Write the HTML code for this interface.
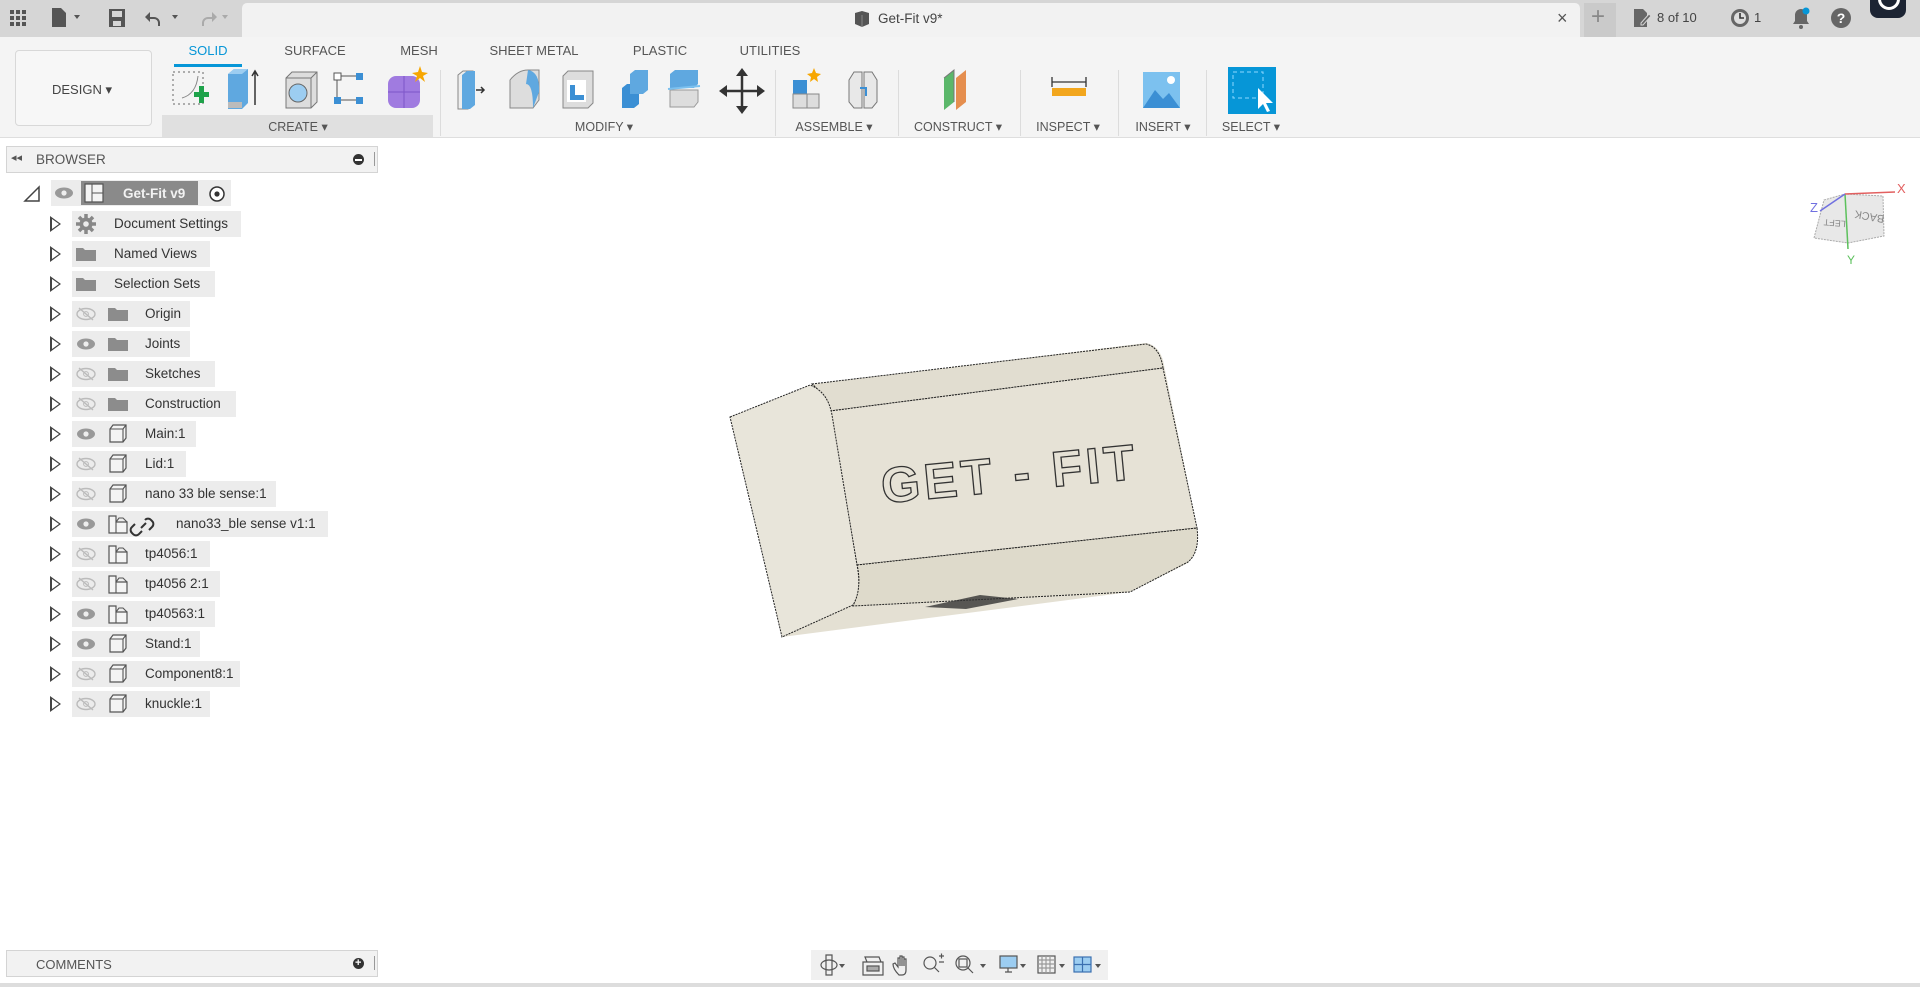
<!DOCTYPE html>
<html><head><meta charset="utf-8">
<style>
*{margin:0;padding:0;box-sizing:border-box}
body{width:1920px;height:987px;background:#fff;font-family:"Liberation Sans",sans-serif;position:relative;overflow:hidden;color:#3c3c3c}
.a{position:absolute}
.t{font-size:12.5px;color:#555;white-space:nowrap}
.tab{position:absolute;top:43px;font-size:13px;color:#555;transform:translateX(-50%)}
.gl{position:absolute;top:119px;font-size:12.5px;color:#555;transform:translateX(-50%);white-space:nowrap}
.sep{position:absolute;top:70px;width:1px;height:66px;background:#dcdcdc}
.row{position:absolute;height:26px;background:#ececec;font-size:13.5px;color:#333;line-height:26px;white-space:nowrap}
.tri{position:absolute;width:0;height:0;border-left:11px solid #444;border-top:8px solid transparent;border-bottom:8px solid transparent}
.tri:after{content:"";position:absolute;left:-9px;top:-5px;border-left:7px solid #fff;border-top:5px solid transparent;border-bottom:5px solid transparent}
</style></head><body>
<!-- top bar -->
<div class="a" style="left:0;top:0;width:1920px;height:37px;background:#d6d6d6"></div>
<div class="a" style="left:242px;top:3px;width:1338px;height:34px;background:#f2f2f2;border-radius:5px 5px 0 0"></div>
<div class="a" style="left:1584px;top:3px;width:32px;height:34px;background:#cacaca"></div>
<svg class="a" style="left:0;top:0" width="260" height="37">
<g fill="#555"><rect x="10" y="10" width="4" height="4"/><rect x="16" y="10" width="4" height="4"/><rect x="22" y="10" width="4" height="4"/><rect x="10" y="16" width="4" height="4"/><rect x="16" y="16" width="4" height="4"/><rect x="22" y="16" width="4" height="4"/><rect x="10" y="22" width="4" height="4"/><rect x="16" y="22" width="4" height="4"/><rect x="22" y="22" width="4" height="4"/>
<path d="M52 8h9l5 5v14h-14z"/><path d="M74 15l3 4 3-4z"/>
<path d="M109 9h16v18h-16z M112 11v6h10v-6z M113 21h8v5h-8z" fill-rule="evenodd"/>
<path d="M150 12l-5 5 5 5v-3h4a4 4 0 0 1 4 4v3h2v-3a6 6 0 0 0-6-6h-4z"/><path d="M172 15l3 4 3-4z"/>
</g><g fill="#aaa"><path d="M212 12l5 5-5 5v-3h-4a4 4 0 0 0-4 4v3h-2v-3a6 6 0 0 1 6-6h4z"/><path d="M222 15l3 4 3-4z"/></g></svg>
<svg class="a" style="left:853px;top:10px" width="18" height="18"><path d="M2 3l7-2 7 2v11l-7 3-7-3z" fill="#555"/><path d="M9 5v12" stroke="#888"/></svg>
<div class="a" style="left:878px;top:11px;font-size:13.5px;color:#444">Get-Fit v9*</div>
<div class="a" style="left:1557px;top:8px;font-size:18px;color:#555">×</div>
<div class="a" style="left:1591px;top:3px;font-size:24px;color:#888">+</div>
<svg class="a" style="left:1632px;top:8px" width="22" height="20"><path d="M2 1h9l4 4v14h-13z" fill="#666"/><path d="M9 15l8-9 2 2-8 9h-2z" fill="#666" stroke="#d6d6d6"/></svg>
<div class="a" style="left:1657px;top:10px;font-size:13px;color:#444">8 of 10</div>
<svg class="a" style="left:1729px;top:7px" width="22" height="22"><circle cx="11" cy="11" r="9" fill="#666"/><circle cx="11" cy="11" r="6" fill="#ddd"/><path d="M11 6v5h4" stroke="#333" stroke-width="1.6" fill="none"/></svg>
<div class="a" style="left:1754px;top:10px;font-size:13px;color:#444">1</div>
<svg class="a" style="left:1790px;top:6px" width="22" height="24"><path d="M11 3a6 6 0 0 1 6 6v6l2 3h-16l2-3v-6a6 6 0 0 1 6-6z" fill="#666"/><circle cx="11" cy="21" r="2" fill="#666"/><circle cx="16" cy="5" r="3.5" fill="#0696d7"/></svg>
<svg class="a" style="left:1830px;top:7px" width="22" height="22"><circle cx="11" cy="11" r="10" fill="#666"/><text x="11" y="16" font-size="14" font-weight="bold" fill="#fff" text-anchor="middle" font-family="Liberation Sans">?</text></svg>
<div class="a" style="left:1870px;top:-14px;width:36px;height:32px;background:#1c2433;border-radius:0 0 8px 8px"></div>
<div class="a" style="left:1878px;top:-12px;width:22px;height:22px;border:3px solid #fff;border-radius:50%"></div>

<!-- toolbar -->
<div class="a" style="left:0;top:37px;width:1920px;height:101px;background:#f4f4f4;border-bottom:1px solid #dedede"></div>
<div class="a" style="left:15px;top:50px;width:137px;height:76px;border:1px solid #d8d8d8;border-radius:4px;background:#f7f7f7"></div>
<div class="a" style="left:52px;top:82px;font-size:13px;color:#444">DESIGN ▾</div>
<div class="tab" style="left:208px;color:#0696d7">SOLID</div>
<div class="a" style="left:174px;top:64px;width:68px;height:3px;background:#0696d7"></div>
<div class="tab" style="left:315px">SURFACE</div>
<div class="tab" style="left:419px">MESH</div>
<div class="tab" style="left:534px">SHEET METAL</div>
<div class="tab" style="left:660px">PLASTIC</div>
<div class="tab" style="left:770px">UTILITIES</div>
<div class="a" style="left:162px;top:115px;width:271px;height:22px;background:#e0e0e0"></div>
<div class="gl" style="left:298px">CREATE ▾</div>
<div class="gl" style="left:604px">MODIFY ▾</div>
<div class="gl" style="left:834px">ASSEMBLE ▾</div>
<div class="gl" style="left:958px">CONSTRUCT ▾</div>
<div class="gl" style="left:1068px">INSPECT ▾</div>
<div class="gl" style="left:1163px">INSERT ▾</div>
<div class="gl" style="left:1251px">SELECT ▾</div>
<div class="sep" style="left:440px"></div><div class="sep" style="left:775px"></div><div class="sep" style="left:898px"></div><div class="sep" style="left:1020px"></div><div class="sep" style="left:1118px"></div><div class="sep" style="left:1206px"></div>
<svg class="a" style="left:0;top:60px" width="1300" height="60">
<!-- sketch -->
<rect x="173" y="12" width="30" height="32" fill="none" stroke="#666" stroke-dasharray="2 3"/><path d="M182 38q14-4 16-22" stroke="#888" fill="none"/><path d="M194 32h5v-6h5v6h5v5h-5v6h-5v-6h-5z" fill="#1ea24a"/>
<!-- extrude -->
<path d="M228 14l6-5h14v34l-6 6h-14z" fill="#5fa8e0"/><path d="M228 14l6-5h14l-6 5z" fill="#9ccdf1"/><path d="M228 42h14v6h-14z" fill="#bbb"/><path d="M255 45v-33M252 16l3-5 3 5" stroke="#333" stroke-width="1.5" fill="none"/>
<!-- revolve -->
<path d="M286 18l6-6h25v30l-6 6h-25z" fill="#ddd" stroke="#777"/><path d="M286 18h25v30M311 18l6-6" stroke="#777" fill="none"/><circle cx="298" cy="33" r="9" fill="#9ccdf1" stroke="#666"/>
<!-- pattern -->
<rect x="334" y="13" width="7" height="7" fill="#fff" stroke="#555"/><rect x="356" y="13" width="7" height="7" fill="#3b8fd4"/><rect x="334" y="37" width="7" height="7" fill="#3b8fd4"/><rect x="356" y="37" width="7" height="7" fill="#3b8fd4"/><path d="M341 16h15M337 20v17M341 40h15" stroke="#555"/>
<!-- form -->
<rect x="388" y="16" width="32" height="32" rx="8" fill="#a07be0"/><path d="M404 16v32M388 32h32" stroke="#7d56c9"/><path d="M420 6l2 6 6 1-5 3 2 6-5-4-5 4 2-6-5-3 6-1z" fill="#f7a600"/>
<!-- modify -->
<path d="M458 15l5-4h10v34l-5 4h-10z" fill="#eee" stroke="#888"/><path d="M462 15l5-4h8v34l-5 4h-8z" fill="#5fa8e0"/><path d="M476 30h8M481 27l3 3-3 3" stroke="#333" stroke-width="1.5" fill="none"/>
<path d="M510 20q8-10 18-10h11v30l-6 8h-23z" fill="#ddd" stroke="#888"/><path d="M528 10q12 2 11 22l-6 16q0-24-7-24z" fill="#5fa8e0"/>
<path d="M563 16l5-5h25v32l-5 5h-25z" fill="#ddd" stroke="#888"/><rect x="567" y="20" width="19" height="22" fill="#fff"/><path d="M570 25h5v10h9v5h-14z" fill="#3b8fd4"/>
<path d="M622 28l5-4h12v20l-5 4h-12z" fill="#3b8fd4"/><path d="M630 14l5-4h13v20l-5 4h-13z" fill="#5fa8e0"/>
<path d="M670 30h28v12l-4 5h-24z" fill="#ddd" stroke="#999"/><path d="M670 14l5-4h23v14l-4 4h-24z" fill="#5fa8e0"/><path d="M668 29l32-3" stroke="#7cc1ef" stroke-width="2"/>
<path d="M742 12v38M723 31h38" stroke="#333" stroke-width="2.5"/><path d="M742 8l-6 8h12zM742 54l-6-8h12zM719 31l8-6v12zM765 31l-8-6v12z" fill="#333"/>
<!-- assemble -->
<path d="M793 20h14v14h-14z" fill="#3b8fd4"/><path d="M793 34h14v14h-14zM807 34h12v14h-12z" fill="#ddd" stroke="#888"/><path d="M814 8l2 5 5 1-4 3 1 5-4-3-4 3 1-5-4-3 5-1z" fill="#f7a600"/>
<path d="M849 20l5-8h8v36h-8l-5-6z M877 20l-5-8h-8v36h8l5-6z" fill="#e8e8e8" stroke="#777"/><path d="M860 28h6v8" stroke="#3b8fd4" stroke-width="2" fill="none"/>
<!-- construct -->
<path d="M944 18l10-8v32l-10 8z" fill="#5bb76a"/><path d="M956 18l10-8v32l-10 8z" fill="#e58e4e"/><path d="M944 18l10-8v32" fill="none" stroke="#777"/>
<!-- inspect -->
<path d="M1052 17v10M1086 17v10M1052 22h34" stroke="#333" stroke-width="1.3"/><rect x="1052" y="28" width="34" height="8" fill="#f2a61d"/>
<!-- insert -->
<rect x="1143" y="12" width="37" height="36" fill="#7cc1ef"/><circle cx="1171" cy="20" r="4" fill="#fff"/><path d="M1143 48l12-18 8 9 6-6 11 15z" fill="#3b8fd4"/>
<!-- select -->
<rect x="1228" y="7" width="48" height="47" fill="#0696d7"/><rect x="1233" y="12" width="30" height="26" fill="none" stroke="#8fd8ff" stroke-dasharray="4 3"/><path d="M1258 28v21l5-5 4 8 3-1-4-8h7z" fill="#fff"/>
</svg>

<!-- browser -->
<div class="a" style="left:6px;top:146px;width:372px;height:27px;background:#f2f2f2;border:1px solid #d4d4d4"></div>
<div class="a" style="left:11px;top:151px;font-size:11px;color:#555">◂◂</div>
<div class="a" style="left:36px;top:152px;font-size:13.5px;color:#555">BROWSER</div>
<div class="a" style="left:353px;top:154px;width:11px;height:11px;border-radius:50%;background:#333"></div>
<div class="a" style="left:355px;top:159px;width:7px;height:2px;background:#fff"></div>
<div class="a" style="left:374px;top:152px;width:1px;height:14px;background:#999"></div>

<svg class="a" style="left:22px;top:184px" width="20" height="20"><path d="M3 17h14v-14z" fill="none" stroke="#444" stroke-width="1.5"/></svg>
<div class="row" style="left:51px;top:180px;width:180px"></div>
<div class="a" style="left:81px;top:181px;width:117px;height:24px;background:#8a8a8a"></div>
<div class="a" style="left:123px;top:186px;font-size:13.5px;font-weight:bold;color:#f2f2f2">Get-Fit v9</div>
<svg class="a" style="left:207px;top:184px" width="20" height="20"><circle cx="10" cy="10" r="7" fill="#fff" stroke="#333" stroke-width="1.5"/><circle cx="10" cy="10" r="2.6" fill="#333"/></svg>

<svg class="a" style="left:0;top:0;pointer-events:none" width="340" height="720">
<defs>
<g id="eye"><ellipse cx="0" cy="0" rx="9" ry="5.5" fill="#999"/><circle cx="0" cy="0" r="2.6" fill="#eee"/></g>
<g id="eyex"><ellipse cx="0" cy="0" rx="9" ry="5.5" fill="none" stroke="#bbb" stroke-width="1.4"/><circle cx="0" cy="0" r="2.4" fill="none" stroke="#bbb"/><path d="M-7 -6l14 12" stroke="#bbb" stroke-width="1.4"/></g>
<g id="fold"><path d="M-10 -6h7l2 2h11v11h-20z" fill="#8c8c8c"/></g>
<g id="box"><path d="M-8 -5l3-4h13v13l-3 4h-13z" fill="#f4f4f4" stroke="#555" stroke-width="1.2"/><path d="M-8 -5h13v13M5 -5l3-4" fill="none" stroke="#555" stroke-width="1.1"/></g>
<g id="comp"><path d="M-9 -8h7v6h11v11h-18z" fill="#f4f4f4" stroke="#555" stroke-width="1.2"/><path d="M-2 -2v11M-2 -2l3-4h4l4 4" fill="none" stroke="#555" stroke-width="1.1"/></g>
</defs>
<use href="#eye" x="64" y="193"/>
<g transform="translate(94,193)"><path d="M-9 -9h18v18h-18z" fill="#f4f4f4" stroke="#555" stroke-width="1.2"/><path d="M-2 -9v18M-2 0h11" stroke="#555"/></g>
<g transform="translate(86,224)" fill="#888"><circle r="6.5"/><g stroke="#888" stroke-width="3.5"><path d="M0 -10v20M-10 0h20M-7 -7l14 14M7 -7l-14 14"/></g><circle r="2.8" fill="#ececec"/></g>
<use href="#fold" x="86" y="254"/><use href="#fold" x="86" y="284"/>
<use href="#eyex" x="86" y="314"/><use href="#fold" x="118" y="314"/>
<use href="#eye" x="86" y="344"/><use href="#fold" x="118" y="344"/>
<use href="#eyex" x="86" y="374"/><use href="#fold" x="118" y="374"/>
<use href="#eyex" x="86" y="404"/><use href="#fold" x="118" y="404"/>
<use href="#eye" x="86" y="434"/><use href="#box" x="118" y="434"/>
<use href="#eyex" x="86" y="464"/><use href="#box" x="118" y="464"/>
<use href="#eyex" x="86" y="494"/><use href="#box" x="118" y="494"/>
<use href="#eye" x="86" y="524"/><use href="#comp" x="118" y="524"/>
<path d="M141 528l5-5M145 520a4 4 0 0 1 6 0l1 1a4 4 0 0 1 0 6l-3 3M142 531l-3 3a4 4 0 0 1-6 0l-1-1a4 4 0 0 1 0-6l3-3" stroke="#333" stroke-width="2" fill="none"/>
<use href="#eyex" x="86" y="554"/><use href="#comp" x="118" y="554"/>
<use href="#eyex" x="86" y="584"/><use href="#comp" x="118" y="584"/>
<use href="#eye" x="86" y="614"/><use href="#comp" x="118" y="614"/>
<use href="#eye" x="86" y="644"/><use href="#box" x="118" y="644"/>
<use href="#eyex" x="86" y="674"/><use href="#box" x="118" y="674"/>
<use href="#eyex" x="86" y="704"/><use href="#box" x="118" y="704"/>
</svg>

<!-- tree rows (triangle, bg, text) -->
<div class="tri" style="left:50px;top:216px"></div><div class="row" style="left:72px;top:211px;width:169px;z-index:-1"></div><div class="a t" style="left:114px;top:216px;font-size:13.5px;color:#333">Document Settings</div>
<div class="tri" style="left:50px;top:246px"></div><div class="row" style="left:72px;top:241px;width:138px;z-index:-1"></div><div class="a t" style="left:114px;top:246px;font-size:13.5px;color:#333">Named Views</div>
<div class="tri" style="left:50px;top:276px"></div><div class="row" style="left:72px;top:271px;width:143px;z-index:-1"></div><div class="a t" style="left:114px;top:276px;font-size:13.5px;color:#333">Selection Sets</div>
<div class="tri" style="left:50px;top:306px"></div><div class="row" style="left:72px;top:301px;width:118px;z-index:-1"></div><div class="a t" style="left:145px;top:306px;font-size:13.5px;color:#333">Origin</div>
<div class="tri" style="left:50px;top:336px"></div><div class="row" style="left:72px;top:331px;width:118px;z-index:-1"></div><div class="a t" style="left:145px;top:336px;font-size:13.5px;color:#333">Joints</div>
<div class="tri" style="left:50px;top:366px"></div><div class="row" style="left:72px;top:361px;width:143px;z-index:-1"></div><div class="a t" style="left:145px;top:366px;font-size:13.5px;color:#333">Sketches</div>
<div class="tri" style="left:50px;top:396px"></div><div class="row" style="left:72px;top:391px;width:164px;z-index:-1"></div><div class="a t" style="left:145px;top:396px;font-size:13.5px;color:#333">Construction</div>
<div class="tri" style="left:50px;top:426px"></div><div class="row" style="left:72px;top:421px;width:124px;z-index:-1"></div><div class="a t" style="left:145px;top:426px;font-size:13.5px;color:#333">Main:1</div>
<div class="tri" style="left:50px;top:456px"></div><div class="row" style="left:72px;top:451px;width:114px;z-index:-1"></div><div class="a t" style="left:145px;top:456px;font-size:13.5px;color:#333">Lid:1</div>
<div class="tri" style="left:50px;top:486px"></div><div class="row" style="left:72px;top:481px;width:204px;z-index:-1"></div><div class="a t" style="left:145px;top:486px;font-size:13.5px;color:#333">nano 33 ble sense:1</div>
<div class="tri" style="left:50px;top:516px"></div><div class="row" style="left:72px;top:511px;width:256px;z-index:-1"></div><div class="a t" style="left:176px;top:516px;font-size:13.5px;color:#333">nano33_ble sense v1:1</div>
<div class="tri" style="left:50px;top:546px"></div><div class="row" style="left:72px;top:541px;width:138px;z-index:-1"></div><div class="a t" style="left:145px;top:546px;font-size:13.5px;color:#333">tp4056:1</div>
<div class="tri" style="left:50px;top:576px"></div><div class="row" style="left:72px;top:571px;width:148px;z-index:-1"></div><div class="a t" style="left:145px;top:576px;font-size:13.5px;color:#333">tp4056 2:1</div>
<div class="tri" style="left:50px;top:606px"></div><div class="row" style="left:72px;top:601px;width:143px;z-index:-1"></div><div class="a t" style="left:145px;top:606px;font-size:13.5px;color:#333">tp40563:1</div>
<div class="tri" style="left:50px;top:636px"></div><div class="row" style="left:72px;top:631px;width:128px;z-index:-1"></div><div class="a t" style="left:145px;top:636px;font-size:13.5px;color:#333">Stand:1</div>
<div class="tri" style="left:50px;top:666px"></div><div class="row" style="left:72px;top:661px;width:168px;z-index:-1"></div><div class="a t" style="left:145px;top:666px;font-size:13.5px;color:#333">Component8:1</div>
<div class="tri" style="left:50px;top:696px"></div><div class="row" style="left:72px;top:691px;width:138px;z-index:-1"></div><div class="a t" style="left:145px;top:696px;font-size:13.5px;color:#333">knuckle:1</div>

<!-- model -->
<svg class="a" style="left:700px;top:320px" width="520" height="340">
<g transform="translate(-700,-320)" stroke="#222" stroke-width="1" stroke-dasharray="2 1">
<path d="M810 385L1146 343Q1158 345 1163 360L1197 528Q1198 552 1188 563L1130 592L782 637Z" fill="#e4e0d3" stroke="none"/>
<path d="M812 384L1146 344Q1160 347 1163 368L830 411Q822 392 812 384Z" fill="#e1ddd0"/>
<path d="M830 411L1163 368L1197 528L857 565Z" fill="#e6e2d6"/>
<path d="M857 565L1197 528Q1200 552 1188 562L1130 592L853 606Q862 585 857 565Z" fill="#dedacb"/>
<path d="M730 417L810 385Q828 392 832 415L857 565Q862 590 853 605L782 637Z" fill="#e8e5da"/>
<path d="M925 607l55-12 38 4-52 10z" fill="#333" stroke="none" opacity=".8"/>
</g>
<g transform="translate(310,157) rotate(-5.5)"><text x="0" y="14" text-anchor="middle" font-family="Liberation Sans" font-weight="bold" font-size="50" fill="#e6e2d6" stroke="#333" stroke-width="1.3" letter-spacing="4">GET - FIT</text></g>
</svg>

<!-- viewcube -->
<svg class="a" style="left:1780px;top:165px" width="140" height="110">
<path d="M44 35l21-6 38 2 1 40-36 7-34-5z" fill="#e8e8e8" stroke="#aaa" stroke-dasharray="2 1"/>
<path d="M65 29l3 55" stroke="#5cc15c" stroke-width="1.5"/>
<path d="M65 29l50-2" stroke="#e26060" stroke-width="1.5"/><text x="117" y="28" font-size="13" fill="#e26060" font-family="Liberation Sans">X</text>
<path d="M65 29l-25 17" stroke="#7070e0" stroke-width="1.5"/><text x="30" y="47" font-size="13" fill="#7070e0" font-family="Liberation Sans">Z</text>
<text x="67" y="99" font-size="12" fill="#5cc15c" font-family="Liberation Sans">Y</text>
<text x="90" y="48" font-size="11" fill="#888" font-family="Liberation Sans" transform="rotate(190 90 48)" text-anchor="middle">BACK</text>
<text x="55" y="55" font-size="9" fill="#888" font-family="Liberation Sans" transform="rotate(185 55 55)" text-anchor="middle">LEFT</text>
</svg>

<!-- comments -->
<div class="a" style="left:6px;top:950px;width:372px;height:27px;background:#f2f2f2;border:1px solid #d4d4d4"></div>
<div class="a" style="left:36px;top:957px;font-size:13px;color:#555">COMMENTS</div>
<div class="a" style="left:353px;top:958px;width:11px;height:11px;border-radius:50%;background:#333"></div>
<div class="a" style="left:357px;top:956px;font-size:11px;color:#fff;font-weight:bold;line-height:14px;left:355px">+</div>
<div class="a" style="left:374px;top:956px;width:1px;height:14px;background:#999"></div>
<div class="a" style="left:0;top:983px;width:1920px;height:4px;background:#ddd"></div>

<!-- nav bar -->
<div class="a" style="left:811px;top:950px;width:297px;height:30px;background:#f0f0f0"></div>
<svg class="a" style="left:811px;top:950px" width="297" height="30">
<g fill="none" stroke="#555" stroke-width="1.2">
<ellipse cx="18" cy="15" rx="8" ry="5"/><path d="M15 5h6v20h-6z"/>
<path d="M52 12h20v13h-20zM56 12l-2-5 14 0 2 5"/><rect x="56" y="16" width="12" height="5" fill="#aaa"/>
<path d="M88 25q-6-6-6-11l2-1 3 4v-9l2 0v8v-10l2 0v10v-9l2 0v9v-7l2 0v11q0 5-4 5z"/>
<circle cx="119" cy="13" r="6"/><path d="M123 17l5 5"/><path d="M128 6h5M130.5 3.5v5M128 12h5"/>
<circle cx="152" cy="13" r="7"/><rect x="148" y="9" width="8" height="8"/><path d="M157 18l5 5"/>
<rect x="189" y="6" width="17" height="12" fill="#9ccdf1"/><path d="M194 22h7M197 18v4"/>
<rect x="227" y="6" width="17" height="17"/><path d="M231 6v17M235 6v17M239 6v17M227 10h17M227 14h17M227 18h17" stroke="#999"/>
<rect x="263" y="7" width="17" height="15" fill="#9ccdf1" stroke="#3b70b0"/><path d="M271.5 7v15M263 14.5h17" stroke="#3b70b0"/>
</g>
<g fill="#555"><path d="M28 14l3 4 3-4zM169 14l3 4 3-4zM209 14l3 4 3-4zM248 14l3 4 3-4zM284 14l3 4 3-4z"/></g>
</svg>
</body></html>
